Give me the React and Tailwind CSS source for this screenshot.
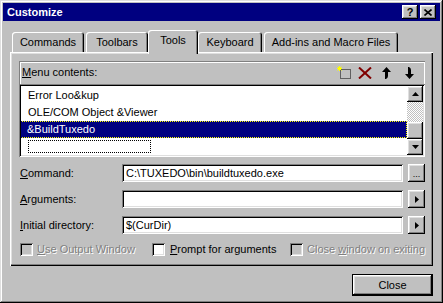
const raised = "shadow-[inset_-1px_-1px_#000,inset_1px_1px_#fff,inset_-2px_-2px_#808080,inset_2px_2px_#dfdfdf]";
const sunken = "shadow-[inset_1px_1px_#808080,inset_-1px_-1px_#fff,inset_2px_2px_#000,inset_-2px_-2px_#dfdfdf]";

function TitleBtn({ children }) {
  return (
    <div className={`w-[16px] h-[14px] bg-[#c0c0c0] flex items-center justify-center ${raised}`}>
      {children}
    </div>
  );
}

function Tab({ label, w, ml, selected }) {
  const base = "flex items-center justify-center whitespace-nowrap shrink-0 rounded-t-[3px] bg-[#c0c0c0] shadow-[inset_1px_1px_#fff,inset_-1px_0_#000,inset_-2px_0_#808080]";
  return selected ? (
    <div className={`${base} relative z-10 h-[24px] -mb-[2px] pb-[3px]`} style={{ width: w, marginLeft: ml }}>
      {label}
    </div>
  ) : (
    <div className={`${base} h-[20px] pt-[1px]`} style={{ width: w, marginLeft: ml }}>
      {label}
    </div>
  );
}

function SmallBtn({ children }) {
  return (
    <div className={`w-[17px] h-[18px] bg-[#c0c0c0] flex items-center justify-center ${raised}`}>
      {children}
    </div>
  );
}

function RightTri() {
  return (
    <svg width="4" height="7" viewBox="0 0 4 7">
      <polygon points="0,0 4,3.5 0,7" fill="#000" />
    </svg>
  );
}

function Check({ disabled }) {
  return (
    <div className={`w-[13px] h-[13px] shrink-0 ${disabled ? "bg-[#c0c0c0]" : "bg-white"} ${sunken}`} />
  );
}

export default function App() {
  return (
    <div className="w-[443px] h-[303px] bg-[#c0c0c0] p-[3px] flex flex-col font-['Liberation_Sans',Arial,sans-serif] text-[11px] text-black leading-none select-none shadow-[inset_-1px_-1px_#000,inset_1px_1px_#dfdfdf,inset_-2px_-2px_#808080,inset_2px_2px_#fff]">
      {/* Title bar */}
      <div className="h-[18px] bg-[#000080] flex items-center pl-[4px] pr-[4px]">
        <span className="text-white font-bold text-[11px]">Customize</span>
        <div className="ml-auto flex gap-[2px]">
          <TitleBtn>
            <span className="font-bold text-[11px] leading-none mt-[1px]">?</span>
          </TitleBtn>
          <TitleBtn>
            <svg width="8" height="7" viewBox="0 0 8 7">
              <path d="M0.5 0.5 L7.5 6.5 M7.5 0.5 L0.5 6.5" stroke="#000" strokeWidth="1.6" />
            </svg>
          </TitleBtn>
        </div>
      </div>

      <div className="px-[7px] mt-[9px] flex flex-col">
        {/* Tabs */}
        <div className="h-[22px] flex items-end">
          <Tab label="Commands" w={72} ml={2} />
          <Tab label="Toolbars" w={62} ml={2} />
          <Tab label="Tools" w={50} ml={0} selected />
          <Tab label="Keyboard" w={64} ml={0} />
          <Tab label="Add-ins and Macro Files" w={134} ml={2} />
        </div>

        {/* Panel */}
        <div className="h-[214px] flex flex-col pt-[9px] pl-[9px] pr-[8px] shadow-[inset_1px_1px_#fff,inset_-1px_-1px_#000,inset_-2px_-2px_#808080,inset_2px_2px_#dfdfdf]">
          {/* Group: Menu contents */}
          <div className="h-[23px] flex items-center pl-[3px] shadow-[inset_1px_1px_#808080,inset_2px_2px_#fff,inset_-1px_0_#fff]">
            <span>
              <u>M</u>enu contents:
            </span>
            <div className="ml-auto flex items-center mr-[11px]">
              {/* new */}
              <svg width="15" height="13" viewBox="0 0 15 13">
                <rect x="3.5" y="3.5" width="10" height="9" fill="none" stroke="#000" strokeWidth="1" strokeDasharray="1 1" />
                <path d="M2.5 0 L2.5 5 M0 2.5 L5 2.5 M0.5 0.5 L4.5 4.5 M4.5 0.5 L0.5 4.5" stroke="#ffff00" strokeWidth="1" />
              </svg>
              {/* delete */}
              <svg width="14" height="12" viewBox="0 0 14 12" className="ml-[6px]">
                <path d="M1 0.5 L13 11.5 M13 0.5 L1 11.5" stroke="#800000" strokeWidth="2" />
              </svg>
              {/* up */}
              <svg width="9" height="12" viewBox="0 0 9 12" className="ml-[10px]">
                <path d="M4.5 0 L9 5 L6 5 L6 9 Q6 11 4 12 L3 12 L3 5 L0 5 Z" fill="#000" />
              </svg>
              {/* down */}
              <svg width="9" height="12" viewBox="0 0 9 12" className="ml-[14px]">
                <path d="M4.5 12 L9 7 L6 7 L6 3 Q6 1 4 0 L3 0 L3 7 L0 7 Z" fill="#000" />
              </svg>
            </div>
          </div>
          {/* Listbox */}
          <div className={`h-[73px] bg-white p-[2px] flex ${sunken}`}>
            <div className="flex-1 flex flex-col pt-[1px] overflow-hidden">
              <div className="h-[17px] flex items-center pl-[7px] shrink-0">Error Loo&amp;kup</div>
              <div className="h-[17px] flex items-center pl-[7px] shrink-0">OLE/COM Object &amp;Viewer</div>
              <div className="h-[17px] flex items-center pl-[6px] shrink-0 bg-[#000080] text-white border border-dotted border-[#ffff00] -ml-[1px]">
                &amp;BuildTuxedo
              </div>
              <div className="h-[17px] flex items-center pl-[7px] shrink-0">
                <div className="w-[123px] h-[13px] border border-dotted border-black" />
              </div>
            </div>
            <div className="w-[16px] flex flex-col">
              <div className={`h-[16px] bg-[#c0c0c0] flex items-center justify-center ${raised}`}>
                <svg width="7" height="4" viewBox="0 0 7 4">
                  <polygon points="3.5,0 7,4 0,4" fill="#000" />
                </svg>
              </div>
              <div className="flex-1 bg-[repeating-conic-gradient(#c0c0c0_0_25%,#fff_0_50%)] bg-[length:2px_2px]" />
              <div className={`h-[17px] bg-[#c0c0c0] ${raised}`} />
              <div className={`h-[16px] bg-[#c0c0c0] flex items-center justify-center ${raised}`}>
                <svg width="7" height="4" viewBox="0 0 7 4">
                  <polygon points="0,0 7,0 3.5,4" fill="#000" />
                </svg>
              </div>
            </div>
          </div>

          {/* Form rows */}
          <div className="mt-[7px] flex flex-col gap-[8px]">
            <div className="h-[18px] flex items-center">
              <div className="w-[103px] pl-[1px]"><u>C</u>ommand:</div>
              <div className={`flex-1 h-[18px] bg-white flex items-center pl-[4px] ${sunken}`}>
                C:\TUXEDO\bin\buildtuxedo.exe
              </div>
              <div className="ml-[5px]">
                <SmallBtn>
                  <span className="text-[9px] leading-none mt-[3px] tracking-[0px]">...</span>
                </SmallBtn>
              </div>
            </div>
            <div className="h-[18px] flex items-center">
              <div className="w-[103px] pl-[1px]"><u>A</u>rguments:</div>
              <div className={`flex-1 h-[18px] bg-white ${sunken}`} />
              <div className="ml-[5px]">
                <SmallBtn><RightTri /></SmallBtn>
              </div>
            </div>
            <div className="h-[18px] flex items-center">
              <div className="w-[103px] pl-[1px]"><u>I</u>nitial directory:</div>
              <div className={`flex-1 h-[18px] bg-white flex items-center pl-[4px] ${sunken}`}>
                $(CurDir)
              </div>
              <div className="ml-[5px]">
                <SmallBtn><RightTri /></SmallBtn>
              </div>
            </div>
          </div>

          {/* Checkboxes */}
          <div className="mt-[9px] h-[13px] flex items-center pl-[1px] whitespace-nowrap">
            <div className="w-[132px] flex items-center shrink-0">
              <Check disabled />
              <span className="ml-[4px] text-[#808080] [text-shadow:1px_1px_#fff]"><u>U</u>se Output Window</span>
            </div>
            <div className="w-[138px] flex items-center shrink-0">
              <Check />
              <span className="ml-[5px]"><u>P</u>rompt for arguments</span>
            </div>
            <div className="flex items-center shrink-0">
              <Check disabled />
              <span className="ml-[4px] text-[#808080] [text-shadow:1px_1px_#fff]">Close <u>w</u>indow on exiting</span>
            </div>
          </div>
        </div>

        {/* Close */}
        <div className="mt-[8px] flex justify-end">
          <div className="w-[81px] h-[22px] border border-black">
            <div className={`w-full h-full bg-[#c0c0c0] flex items-center justify-center ${raised}`}>
              Close
            </div>
          </div>
        </div>
      </div>
    </div>
  );
}
